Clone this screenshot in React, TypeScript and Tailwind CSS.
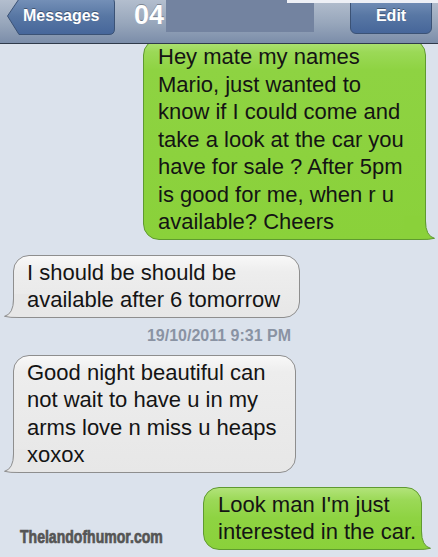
import React from "react";

const font = { fontFamily: '"Liberation Sans", Arial, sans-serif' };

function Tail({ side, fill, stroke }: { side: "left" | "right"; fill: string; stroke: string }) {
  return (
    <svg
      width="31"
      height="24"
      viewBox="0 0 31 24"
      className={
        side === "right"
          ? "absolute bottom-[-1px] right-[-10px]"
          : "absolute bottom-[-1px] left-[-10px] scale-x-[-1]"
      }
    >
      <path d="M0 0 H21.5 V5 Q21.5 20 30.5 22.3 Q25 23.8 16 23.5 H0 Z" fill={fill} />
      <path
        d="M21.5 0 V5 Q21.5 20 30.5 22.3 Q25 23.8 16 23.5 H0"
        fill="none"
        stroke={stroke}
        strokeWidth="1"
      />
    </svg>
  );
}

function Lines({ lines }: { lines: string[] }) {
  return (
    <span className="relative">
      {lines.map((l, i) => (
        <React.Fragment key={i}>
          {l}
          {i < lines.length - 1 && <br />}
        </React.Fragment>
      ))}
    </span>
  );
}

function Green({ lines, className }: { lines: string[]; className: string }) {
  return (
    <div
      className={
        "relative rounded-[16px] border border-[#5f9a30] bg-[linear-gradient(to_bottom,#b2e37a_0px,#9bd957_12px,#8ed342_30px,#8ad13a_100%)] pl-[14px] pt-[3px] pb-[3px] text-[22px] leading-[27.5px] text-[#141414] whitespace-nowrap " +
        className
      }
      style={font}
    >
      <Tail side="right" fill="#8ad13a" stroke="#5f9a30" />
      <Lines lines={lines} />
    </div>
  );
}

function Gray({ lines, className }: { lines: string[]; className: string }) {
  return (
    <div
      className={
        "relative rounded-[16px] border border-[#8e8e8e] bg-[linear-gradient(to_bottom,#f8f8f8_0px,#ededed_16px,#e7e7e7_100%)] pl-[13px] pt-[3px] pb-[3px] text-[22px] leading-[27.5px] text-[#141414] whitespace-nowrap " +
        className
      }
      style={font}
    >
      <Tail side="left" fill="#e7e7e7" stroke="#8e8e8e" />
      <Lines lines={lines} />
    </div>
  );
}

export default function App() {
  return (
    <div className="relative h-[557px] w-[438px] overflow-hidden bg-[#dbe2ec]" style={font}>
      {/* header */}
      <div className="relative z-10 flex h-[44px] items-start border-b border-[#2f3a4a] bg-[linear-gradient(to_bottom,#b3bece,#97a6bb_55%,#7b8da9)] pl-[7px]">
        <div className="relative mt-[-3px] h-[38px] w-[108px]">
          <svg width="108" height="38" viewBox="0 0 108 38" className="absolute inset-0">
            <defs>
              <linearGradient id="bb" x1="0" y1="0" x2="0" y2="1">
                <stop offset="0" stopColor="#7893ba" />
                <stop offset="0.5" stopColor="#5877a4" />
                <stop offset="1" stopColor="#46669a" />
              </linearGradient>
            </defs>
            <path
              d="M13 0.5 H102 Q107.5 0.5 107.5 6 V32 Q107.5 37.5 102 37.5 H12 L0.5 19 Z"
              fill="url(#bb)"
              stroke="#3b5275"
              strokeWidth="1"
            />
          </svg>
          <div className="relative flex h-full items-center pl-[16px] text-[16px] font-bold text-white [text-shadow:0_-1px_0_rgba(0,0,0,0.35)]">
            Messages
          </div>
        </div>
        <div className="ml-[19px] mt-[2px] text-[27px] font-bold leading-[27px] text-white [text-shadow:0_-1px_0_rgba(0,0,0,0.3)]">
          04
        </div>
        <div className="ml-[2px] h-[32px] w-[148px] bg-[#7383a0]" />
        <div className="ml-[36px] mt-[-3px] flex h-[37px] w-[82px] items-center justify-center rounded-[6px] border border-[#3b5275] bg-[linear-gradient(to_bottom,#7893ba,#5877a4_50%,#46669a)] text-[16px] font-bold text-white [text-shadow:0_-1px_0_rgba(0,0,0,0.35)]">
          Edit
        </div>
        <div className="absolute right-0 top-0 h-[3px] w-[151px] bg-[#eef0f6]" />
      </div>

      {/* messages */}
      <div className="flex flex-col">
        <div className="mt-[-5px] flex justify-end pr-[12px]">
          <Green
            className="w-[283px]"
            lines={[
              "Hey mate my names",
              "Mario, just wanted to",
              "know if I could come and",
              "take a look at the car you",
              "have for sale ? After 5pm",
              "is good for me, when r u",
              "available? Cheers",
            ]}
          />
        </div>
        <div className="mt-[15px] flex pl-[13px]">
          <Gray className="w-[287px]" lines={["I should be should be", "available after 6 tomorrow"]} />
        </div>
        <div className="mt-[8px] text-center text-[16px] font-bold leading-[20px] text-[#8a93a3]">
          19/10/2011 9:31 PM
        </div>
        <div className="mt-[9px] flex pl-[13px]">
          <Gray
            className="w-[283px]"
            lines={["Good night beautiful can", "not wait to have u in my", "arms love n miss u heaps", "xoxox"]}
          />
        </div>
        <div className="mt-[14px] flex items-end justify-between pr-[16px]">
          <div className="pl-[20px]">
            <span className="inline-block origin-left scale-x-[0.78] text-[18px] font-bold leading-[20px] text-[#555555] [-webkit-text-stroke:0.7px_#555555]">
              Thelandofhumor.com
            </span>
          </div>
          <Green className="w-[230px]" lines={["Look man I'm just", "interested in the car."]} />
        </div>
      </div>
    </div>
  );
}
